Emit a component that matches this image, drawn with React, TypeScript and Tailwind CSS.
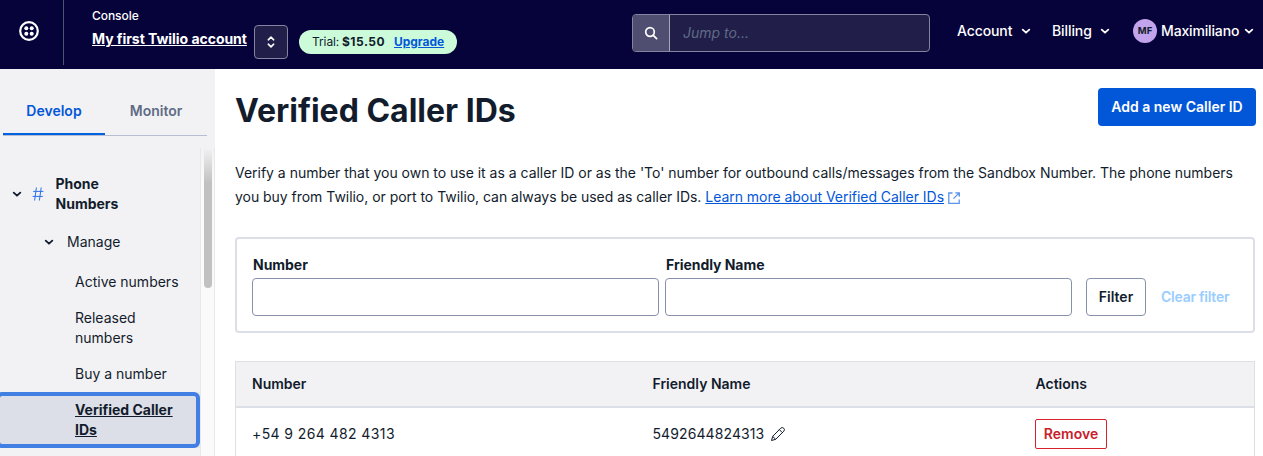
import type { ReactNode } from "react";

function Chevron({ className = "" }: { className?: string }) {
  return (
    <svg viewBox="0 0 10 8" className={`h-2 w-2.5 shrink-0 ${className}`} fill="none" stroke="currentColor" strokeWidth="1.8" strokeLinecap="round" strokeLinejoin="round">
      <path d="M1.7 2.6 5 5.7 8.3 2.6" />
    </svg>
  );
}

function Header() {
  return (
    <header className="flex h-[69px] shrink-0 items-start bg-[#06033a] text-white">
      <div className="flex h-[65px] w-16 shrink-0 border-r border-[#4b5671] pt-[21px] pl-[19px]">
        <svg viewBox="0 0 20 20" className="size-5">
          <circle cx="10" cy="10" r="8.8" fill="none" stroke="white" strokeWidth="2.2" />
          <circle cx="7.3" cy="7.3" r="2" fill="white" />
          <circle cx="12.7" cy="7.3" r="2" fill="white" />
          <circle cx="7.3" cy="12.7" r="2" fill="white" />
          <circle cx="12.7" cy="12.7" r="2" fill="white" />
        </svg>
      </div>
      <div className="ml-7 w-[162px] shrink-0 pt-1.5 whitespace-nowrap">
        <div className="text-xs leading-5 font-medium tracking-[-0.05px]">Console</div>
        <a className="mt-[3px] block text-sm leading-5 font-bold tracking-[-0.04px] underline">My first Twilio account</a>
      </div>
      <button className="mt-[25px] flex size-[34px] shrink-0 items-center justify-center rounded border border-[#8583a0] bg-[#211e4a]">
        <svg viewBox="0 0 8 12" className="h-3 w-2" fill="none" stroke="white" strokeWidth="1.6" strokeLinecap="round" strokeLinejoin="round">
          <path d="M1.3 3.8 4 1.2l2.7 2.6M1.3 8.2 4 10.8l2.7-2.6" />
        </svg>
      </button>
      <div className="mt-[30px] ml-[11px] flex h-6 w-[158px] shrink-0 items-center rounded-full bg-[#cbfbd9] pl-[13px] text-xs whitespace-nowrap text-[#121c2d]">
        <span className="w-[26px] tracking-[-0.1px]">Trial:</span>
        <span className="ml-1 w-[44px] font-bold tracking-[0.5px]">$15.50</span>
        <a className="ml-2 font-bold tracking-[-0.02px] text-[#0257d9] underline">Upgrade</a>
      </div>
      <div className="mt-3.5 ml-[175px] flex h-[38px] w-[298px] shrink-0 overflow-hidden rounded border border-[#8583a0] bg-[#211e4a]">
        <div className="flex w-[37px] items-center justify-center border-r border-[#a5a4b8] bg-[#504e70]">
          <svg viewBox="0 0 14 14" className="size-3.5" fill="none" stroke="white" strokeWidth="1.7" strokeLinecap="round">
            <circle cx="6" cy="6" r="4.3" />
            <path d="m9.3 9.3 3.3 3.3" />
          </svg>
        </div>
        <span className="pl-[13px] text-sm leading-9 text-[#606b85] italic">Jump to...</span>
      </div>
      <nav className="ml-[27px] flex h-[62px] items-center text-sm font-medium whitespace-nowrap">
        <span className="w-16 tracking-[-0.1px]">Account</span>
        <Chevron />
        <span className="ml-[21px] w-12 tracking-[-0.1px]">Billing</span>
        <Chevron />
        <span className="ml-[23px] flex size-6 items-center justify-center rounded-full bg-[#c1a4ec] text-[9.5px] font-bold text-[#121c2d]">MF</span>
        <span className="ml-1 w-[83px] tracking-[-0.15px]">Maximiliano</span>
        <Chevron />
      </nav>
    </header>
  );
}

function SideLink({ children }: { children: ReactNode }) {
  return <a className="block w-[190px] py-2 pr-2 pl-[75px]">{children}</a>;
}

function Sidebar() {
  return (
    <aside className="flex w-[215px] shrink-0 flex-col bg-[#f2f2f4] text-sm leading-5 text-[#121c2d]">
      <div className="mt-[19px] ml-[3px] flex h-12 w-[204px] border-b border-[#b9bdd2] text-center leading-[46px] font-semibold">
        <div className="h-[47px] w-[102px] border-b-2 border-[#0263e0] text-[#0257d9]">Develop</div>
        <div className="w-[102px] text-[#606b85]">Monitor</div>
      </div>
      <div className="mt-3 flex min-h-0 flex-1">
        <div className="w-[200px] shrink-0">
          <div className="flex items-center pt-[26px] pl-3">
            <Chevron />
            <svg viewBox="0 0 12 14" className="ml-2.5 h-3.5 w-3" fill="none" stroke="#2a71e8" strokeWidth="1">
              <path d="M4.4.5 2.6 13.5M9.2.5 7.4 13.5M1.2 4.4h10.2M.6 9.4h10.2" />
            </svg>
            <span className="ml-[11.5px] w-20 font-bold">Phone Numbers</span>
          </div>
          <div className="mt-[18px] flex items-center pl-11">
            <Chevron />
            <span className="ml-[13px]">Manage</span>
          </div>
          <div className="mt-3">
            <SideLink>
              <span className="whitespace-nowrap">Active numbers</span>
            </SideLink>
            <SideLink>Released numbers</SideLink>
            <SideLink>Buy a number</SideLink>
          </div>
          <div className="bg-[#e8e9ef]">
            <a className="-ml-1 block h-14 rounded-md border-4 border-[#417fe2] bg-[#dcdfe7] py-1 pr-4 pl-[75px] font-bold underline">Verified Caller IDs</a>
          </div>
        </div>
        <div className="w-[15px] border-x border-[#e8e8e9] bg-gradient-to-b from-[#f2f2f4] to-[#fafafa] to-10% pl-[3px]">
          <div className="h-[140px] w-2 rounded-b bg-gradient-to-b from-[#f2f2f4] to-[#c1c1c1] to-25%" />
        </div>
      </div>
    </aside>
  );
}

function Field({ label }: { label: string }) {
  return (
    <label className="block w-[407px]">
      <span className="block pl-px leading-5 font-bold tracking-[-0.04px]">{label}</span>
      <input className="mt-[3px] block h-[38px] w-full rounded border border-[#8891aa]" />
    </label>
  );
}

function CallerTable() {
  return (
    <div className="mt-7 w-[1020px] border-x border-t border-[#dcdfe6]">
      <div className="flex h-[46px] items-center border-b-2 border-[#dcdfe6] bg-[#f2f2f4] pl-4 font-semibold">
        <span className="w-[400.5px]">Number</span>
        <span className="w-[383px]">Friendly Name</span>
        <span>Actions</span>
      </div>
      <div className="flex h-[51px] items-center pl-4">
        <span className="w-[400.5px] tracking-[0.4px]">+54 9 264 482 4313</span>
        <span className="flex w-[382.5px] items-center tracking-[0.1px]">
          5492644824313
          <svg viewBox="0 0 16 16" className="ml-1.5 size-4" fill="none" stroke="currentColor" strokeWidth="1" strokeLinejoin="round">
            <path d="M1.5 14.5 2.7 10.4 10.7 2.2Q12.2.8 13.7 2.2T13.8 5.2L5.7 13.3ZM9.3 3.6l3 3M2.7 10.4l3 2.9" />
          </svg>
        </span>
        <button className="h-[30px] w-[72px] rounded-xs border border-[#d6232b] font-semibold text-[#c9202a]">Remove</button>
      </div>
    </div>
  );
}

export default function App() {
  return (
    <div className="flex h-[456px] w-[1263px] flex-col overflow-hidden bg-white font-[Inter,sans-serif]">
      <Header />
      <div className="flex min-h-0 flex-1">
        <Sidebar />
        <main className="min-w-0 flex-1 overflow-hidden pl-5 text-sm text-[#121c2d]">
          <div className="flex items-start justify-between pt-[19px] pr-[7px]">
            <h1 className="mt-[3px] text-[32px] leading-10 font-bold">Verified Caller IDs</h1>
            <button className="h-[38px] w-[158px] rounded bg-[#0257d9] font-semibold whitespace-nowrap text-white">Add a new Caller ID</button>
          </div>
          <p className="mt-[30px] leading-6 tracking-[-0.016px] whitespace-nowrap">
            Verify a number that you own to use it as a caller ID or as the 'To' number for outbound calls/messages from the Sandbox Number. The phone numbers
            <br />
            <span className="tracking-[-0.033px]">
              you buy from Twilio, or port to Twilio, can always be used as caller IDs.{" "}
              <a className="text-[#0257d9] underline">Learn more about Verified Caller IDs</a>
            </span>
            <svg viewBox="0 0 12 12" className="ml-1 inline-block size-3" fill="none" stroke="#5a94ed" strokeWidth="1.3">
              <path d="M4.5 1H.8v10.3h10.4V7.5M7.3.8h4v4M11.2.9 5.5 6.6" />
            </svg>
          </p>
          <section className="mt-7 flex h-24 w-[1020px] rounded border-2 border-[#dcdfe6] pt-4 pl-[15px]">
            <Field label="Number" />
            <div className="w-1.5" />
            <Field label="Friendly Name" />
            <div className="flex pt-[23px] pl-3.5">
              <button className="h-[38px] w-[60px] rounded border border-[#8891aa] font-semibold">Filter</button>
              <button className="ml-[15px] h-[38px] font-semibold tracking-[-0.25px] whitespace-nowrap text-[#99cdff]">Clear filter</button>
            </div>
          </section>
          <CallerTable />
        </main>
      </div>
    </div>
  );
}
